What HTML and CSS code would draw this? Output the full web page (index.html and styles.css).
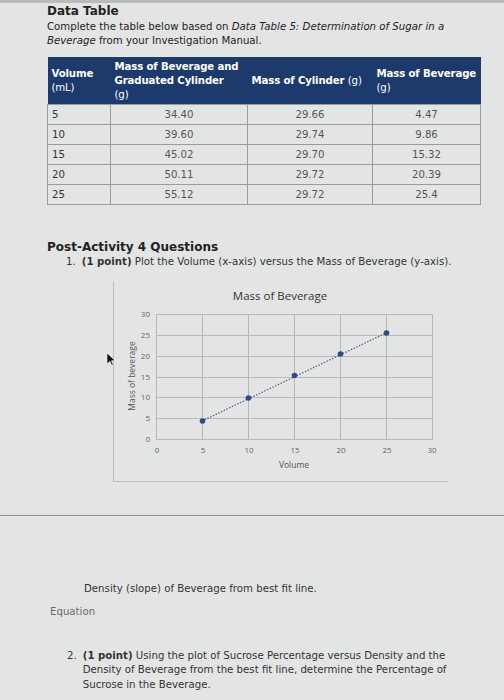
FILE: index.html
```html
<!DOCTYPE html>
<html lang="en">
<head>
  <meta charset="UTF-8" />
  <title>Post-Activity 4</title>
  <link rel="stylesheet" href="styles.css">
</head>
<body>
  <div class="page">
    <!-- Data table section -->
    <h2 class="section-title">Data Table</h2>
    <p class="intro">Complete the table below based on <em>Data Table 5: Determination of Sugar in a Beverage</em> from your Investigation Manual.</p>

    <table class="data-table">
      <colgroup>
        <col class="col-vol">
        <col class="col-bev-cyl">
        <col class="col-cyl">
        <col class="col-bev">
      </colgroup>
      <thead>
        <tr>
          <th>Volume<br><span class="unit">(mL)</span></th>
          <th>Mass of Beverage and Graduated Cylinder<br><span class="unit">(g)</span></th>
          <th>Mass of Cylinder <span class="unit">(g)</span></th>
          <th>Mass of Beverage <span class="unit">(g)</span></th>
        </tr>
      </thead>
      <tbody>
        <tr><td>5</td><td>34.40</td><td>29.66</td><td>4.47</td></tr>
        <tr><td>10</td><td>39.60</td><td>29.74</td><td>9.86</td></tr>
        <tr><td>15</td><td>45.02</td><td>29.70</td><td>15.32</td></tr>
        <tr><td>20</td><td>50.11</td><td>29.72</td><td>20.39</td></tr>
        <tr><td>25</td><td>55.12</td><td>29.72</td><td>25.4</td></tr>
      </tbody>
    </table>

    <!-- Questions -->
    <h2 class="section-title questions-title">Post-Activity 4 Questions</h2>
    <div class="question">
      <span class="q-num">1.</span>
      <span class="q-text"><b>(1 point)</b> Plot the Volume (x-axis) versus the Mass of Beverage (y-axis).</span>
    </div>

    <div class="chart-wrap">
      <svg class="cursor" width="10" height="14" viewBox="0 0 10 14">
        <path d="M1 1 L1 12 L3.8 9.4 L5.8 13.2 L7.3 12.5 L5.4 8.8 L9 8.6 Z" fill="#111" stroke="#fff" stroke-width="0.6"/>
      </svg>
      <div class="chart-frame">
        <svg width="334" height="200" viewBox="0 0 334 200">
          <text class="chart-title" x="166" y="19" text-anchor="middle">Mass of Beverage</text>

          <!-- grid -->
          <g stroke="#b7b9b9" stroke-width="1">
            <rect x="42.5" y="33.5" width="276" height="125" fill="none"/>
            <line x1="88.5" y1="33" x2="88.5" y2="158"/>
            <line x1="134.5" y1="33" x2="134.5" y2="158"/>
            <line x1="180.5" y1="33" x2="180.5" y2="158"/>
            <line x1="226.5" y1="33" x2="226.5" y2="158"/>
            <line x1="272.5" y1="33" x2="272.5" y2="158"/>
            <line x1="42" y1="54.5" x2="318" y2="54.5"/>
            <line x1="42" y1="75.5" x2="318" y2="75.5"/>
            <line x1="42" y1="96.5" x2="318" y2="96.5"/>
            <line x1="42" y1="116.5" x2="318" y2="116.5"/>
            <line x1="42" y1="137.5" x2="318" y2="137.5"/>
          </g>

          <!-- y labels -->
          <g class="tick" text-anchor="end">
            <text x="36" y="36">30</text>
            <text x="36" y="57">25</text>
            <text x="36" y="78">20</text>
            <text x="36" y="99">15</text>
            <text x="36" y="119">10</text>
            <text x="36" y="140">5</text>
            <text x="36" y="161">0</text>
          </g>
          <!-- x labels -->
          <g class="tick" text-anchor="middle">
            <text x="43" y="172">0</text>
            <text x="89" y="172">5</text>
            <text x="135" y="172">10</text>
            <text x="181" y="172">15</text>
            <text x="227" y="172">20</text>
            <text x="273" y="172">25</text>
            <text x="318" y="172">30</text>
          </g>
          <text class="axis-title" x="180" y="187" text-anchor="middle">Volume</text>
          <text class="axis-title" x="0" y="0" text-anchor="middle" transform="translate(21 95) rotate(-90)">Mass of beverage</text>

          <!-- trend line -->
          <line x1="88" y1="140" x2="272" y2="52" stroke="#4a5f8f" stroke-width="1.2" stroke-dasharray="1.5 1.5"/>
          <!-- points -->
          <g fill="#2f4a86">
            <circle cx="88.5" cy="140" r="2.8"/>
            <circle cx="134.5" cy="117" r="2.8"/>
            <circle cx="180.5" cy="94.5" r="2.8"/>
            <circle cx="226.5" cy="73" r="2.8"/>
            <circle cx="272.5" cy="52" r="2.8"/>
          </g>
        </svg>
      </div>
    </div>
  </div>

  <hr class="divider">

  <div class="page lower">
    <p class="answer-label">Density (slope) of Beverage from best fit line.</p>
    <p class="equation">Equation</p>
    <div class="question q2">
      <span class="q-num">2.</span>
      <span class="q-text"><b>(1 point)</b> Using the plot of Sucrose Percentage versus Density and the Density of Beverage from the best fit line, determine the Percentage of Sucrose in the Beverage.</span>
    </div>
  </div>
</body>
</html>
```

FILE: styles.css
```css
:root {
  --bg: #e3e5e5;
  --navy: #1d3a6c;
  --text: #222;
  --muted: #555;
  --line: #9a9c9c;
}

body {
  margin: 0;
  background: var(--bg);
  color: var(--text);
  font-family: "DejaVu Sans", Verdana, sans-serif;
  font-size: 10.2px;
  border-top: 3px solid #b9bbbb;
}

.page {
  padding: 0 24px 0 47px;
}

/* Headings */
.section-title {
  font-size: 12px;
  font-weight: bold;
  margin: 0;
  padding-top: 1px;
  line-height: 15px;
}
.intro {
  margin: 1px 0 0;
  line-height: 13.5px;
}

/* Data table */
.data-table {
  border-collapse: collapse;
  table-layout: fixed;
  margin-top: 10px;
  width: 433px;
  font-size: 10.2px;
}
.col-vol { width: 63px; }
.col-bev-cyl { width: 137px; }
.col-cyl { width: 125px; }
.col-bev { width: 108px; }

.data-table th {
  background: var(--navy);
  color: #fff;
  font-weight: bold;
  text-align: left;
  line-height: 14px;
  padding: 3px 2px 2px 4px;
  vertical-align: middle;
  height: 42px;
  letter-spacing: -0.15px;
}
.data-table th .unit {
  font-weight: normal;
}

.data-table td {
  border: 1px solid var(--line);
  color: var(--muted);
  text-align: center;
  height: 19px;
  padding: 0 4px;
  line-height: 19px;
}
.data-table td:first-child {
  text-align: left;
  color: #333;
}

/* Questions */
.questions-title {
  margin-top: 34px;
}
.question {
  display: flex;
  gap: 6px;
  line-height: 14.5px;
  padding-left: 19px;
  color: #333;
}
.question .q-num {
  flex: none;
}

/* Chart */
.chart-wrap {
  position: relative;
  margin: 11px 0 0 66px;
}
.chart-frame {
  width: 334px;
  height: 200px;
  border-left: 1px solid #bcbebe;
  border-bottom: 1px solid #bcbebe;
}
.chart-frame svg {
  display: block;
}
.cursor {
  position: absolute;
  left: -7px;
  top: 71px;
}
.chart-title {
  font-family: "Open Sans", sans-serif;
  font-size: 11.5px;
  fill: #333;
}
.tick {
  font-family: "Open Sans", sans-serif;
  font-size: 8px;
  fill: #666;
}
.axis-title {
  font-family: "Open Sans", sans-serif;
  font-size: 8.5px;
  fill: #555;
}

.divider {
  border: none;
  border-top: 1px solid #8f9191;
  margin: 33px 0 0;
}

/* Lower section */
.lower {
  padding-top: 66px;
}
.answer-label {
  margin: 0 0 0 37px;
  line-height: 14px;
  color: #333;
}
.equation {
  margin: 9px 0 0 3px;
  color: #6a6c6c;
  line-height: 14px;
}
.q2 {
  margin-top: 30px;
  padding-left: 20px;
}
```
